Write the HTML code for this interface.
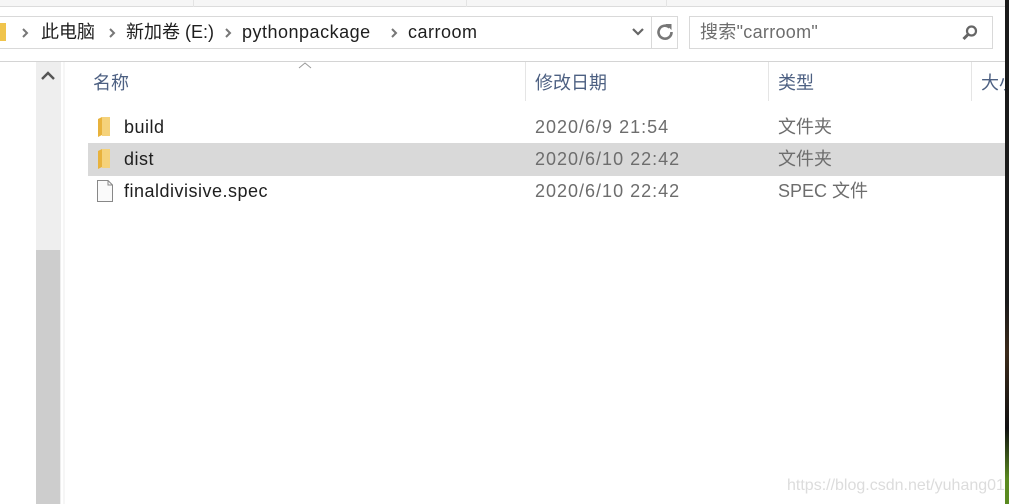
<!DOCTYPE html>
<html><head><meta charset="utf-8"><style>
*{margin:0;padding:0;box-sizing:border-box}
body{width:1009px;height:504px;overflow:hidden;background:#fff;position:relative;font-family:"Liberation Sans","Noto Sans CJK SC",sans-serif;color:#1e1e1e}
.a{position:absolute}
.t{font-size:18px;white-space:nowrap;line-height:20px;letter-spacing:0.5px}
</style></head><body>
<div class="a" style="left:0;top:0;width:1005px;height:7px;background:#f6f6f6;border-bottom:1px solid #dcdcdc"></div>
<div class="a" style="left:193px;top:0;width:1px;height:7px;background:#e4e4e4"></div>
<div class="a" style="left:466px;top:0;width:1px;height:7px;background:#e4e4e4"></div>
<div class="a" style="left:666px;top:0;width:1px;height:7px;background:#e4e4e4"></div>
<div class="a" style="left:-2px;top:16px;width:680px;height:33px;border:1px solid #d9d9d9"></div>
<div class="a" style="left:651px;top:16px;width:1px;height:33px;background:#d9d9d9"></div>
<div class="a" style="left:0;top:23px;width:6px;height:18px;background:#f0c44c"></div>
<svg class="a" style="left:21px;top:27px" width="8" height="12"><path d="M2 2 L6 6 L2 10" stroke="#777" stroke-width="2" fill="none"/></svg>
<div class="a t" style="left:41px;top:22px;letter-spacing:0">此电脑</div>
<svg class="a" style="left:108px;top:27px" width="8" height="12"><path d="M2 2 L6 6 L2 10" stroke="#777" stroke-width="2" fill="none"/></svg>
<div class="a t" style="left:126px;top:22px;letter-spacing:0">新加卷 (E:)</div>
<svg class="a" style="left:224px;top:27px" width="8" height="12"><path d="M2 2 L6 6 L2 10" stroke="#777" stroke-width="2" fill="none"/></svg>
<div class="a t" style="left:242px;top:22px">pythonpackage</div>
<svg class="a" style="left:390px;top:27px" width="8" height="12"><path d="M2 2 L6 6 L2 10" stroke="#777" stroke-width="2" fill="none"/></svg>
<div class="a t" style="left:408px;top:22px">carroom</div>
<svg class="a" style="left:631px;top:27px" width="14" height="10"><path d="M2 2 L7 7 L12 2" stroke="#666" stroke-width="2.2" fill="none"/></svg>
<svg class="a" style="left:655px;top:22px" width="20" height="20"><path d="M14.5 5.5 A6.5 6.5 0 1 0 16.5 10" stroke="#777" stroke-width="2.6" fill="none"/><path d="M10.5 2 L16.5 2 L16.5 8 Z" fill="#777"/></svg>
<div class="a" style="left:689px;top:16px;width:304px;height:33px;border:1px solid #d9d9d9"></div>
<div class="a t" style="left:700px;top:22px;color:#6d6d6d;letter-spacing:0.3px">搜索"carroom"</div>
<svg class="a" style="left:961px;top:24px" width="18" height="18"><circle cx="10.5" cy="7" r="4.5" stroke="#666" stroke-width="2.2" fill="none"/><path d="M7.5 10 L2.5 15" stroke="#666" stroke-width="3"/></svg>
<div class="a" style="left:0;top:61px;width:1005px;height:1px;background:#d4d4d4"></div>
<div class="a" style="left:36px;top:62px;width:25px;height:442px;background:#eeeeee"></div>
<div class="a" style="left:36px;top:250px;width:24px;height:254px;background:#cdcdcd"></div>
<svg class="a" style="left:40px;top:71px" width="16" height="10"><path d="M2 8 L8 2 L14 8" stroke="#555" stroke-width="2.4" fill="none"/></svg>
<div class="a" style="left:63px;top:62px;width:2px;height:442px;background:#f6f6f6"></div>
<svg class="a" style="left:298px;top:62px" width="14" height="8"><path d="M1 6 L7 1 L13 6" stroke="#999" stroke-width="1" fill="none"/></svg>
<div class="a t" style="left:93px;top:73px;color:#4d6082;letter-spacing:0">名称</div>
<div class="a" style="left:525px;top:62px;width:1px;height:39px;background:#e5e5e5"></div>
<div class="a t" style="left:535px;top:73px;color:#4d6082;letter-spacing:0">修改日期</div>
<div class="a" style="left:768px;top:62px;width:1px;height:39px;background:#e5e5e5"></div>
<div class="a t" style="left:778px;top:73px;color:#4d6082;letter-spacing:0">类型</div>
<div class="a" style="left:971px;top:62px;width:1px;height:39px;background:#e5e5e5"></div>
<div class="a t" style="left:981px;top:73px;color:#4d6082;letter-spacing:0">大小</div>
<div class="a" style="left:88px;top:143px;width:917px;height:33px;background:#d9d9d9"></div>
<svg class="a" style="left:97px;top:116px" width="14" height="22"><path d="M1 3 L5 1 L5 19 L1 21Z" fill="#e8b23c"/><rect x="5" y="1" width="8" height="19" fill="#f5d27a"/></svg>
<svg class="a" style="left:97px;top:148px" width="14" height="22"><path d="M1 3 L5 1 L5 19 L1 21Z" fill="#e8b23c"/><rect x="5" y="1" width="8" height="19" fill="#f5d27a"/></svg>
<svg class="a" style="left:96px;top:179px" width="18" height="24"><path d="M1.5 1.5 H12 L16.5 6 V22.5 H1.5Z" fill="#fafafa" stroke="#888"/><path d="M12 1.5 V6 H16.5" fill="none" stroke="#888"/></svg>
<div class="a t" style="left:124px;top:117px">build</div>
<div class="a t" style="left:124px;top:149px">dist</div>
<div class="a t" style="left:124px;top:181px">finaldivisive.spec</div>
<div class="a t" style="left:535px;top:117px;color:#6d6d6d;letter-spacing:1px">2020/6/9 21:54</div>
<div class="a t" style="left:535px;top:149px;color:#6d6d6d;letter-spacing:1px">2020/6/10 22:42</div>
<div class="a t" style="left:535px;top:181px;color:#6d6d6d;letter-spacing:1px">2020/6/10 22:42</div>
<div class="a t" style="left:778px;top:117px;color:#6d6d6d;letter-spacing:0">文件夹</div>
<div class="a t" style="left:778px;top:149px;color:#6d6d6d;letter-spacing:0">文件夹</div>
<div class="a t" style="left:778px;top:181px;color:#6d6d6d;letter-spacing:0">SPEC 文件</div>
<div class="a t" style="left:787px;top:476px;color:#dcdcdc;font-size:16px;letter-spacing:0">https://blog.csdn.net/yuhang01</div>
<div class="a" style="left:1005px;top:0;width:4px;height:504px;background:linear-gradient(#1a1a1a 0,#1a1a1a 60%,#3b2a1a 70%,#111 85%,#5a8a20 95%)"></div>
</body></html>
